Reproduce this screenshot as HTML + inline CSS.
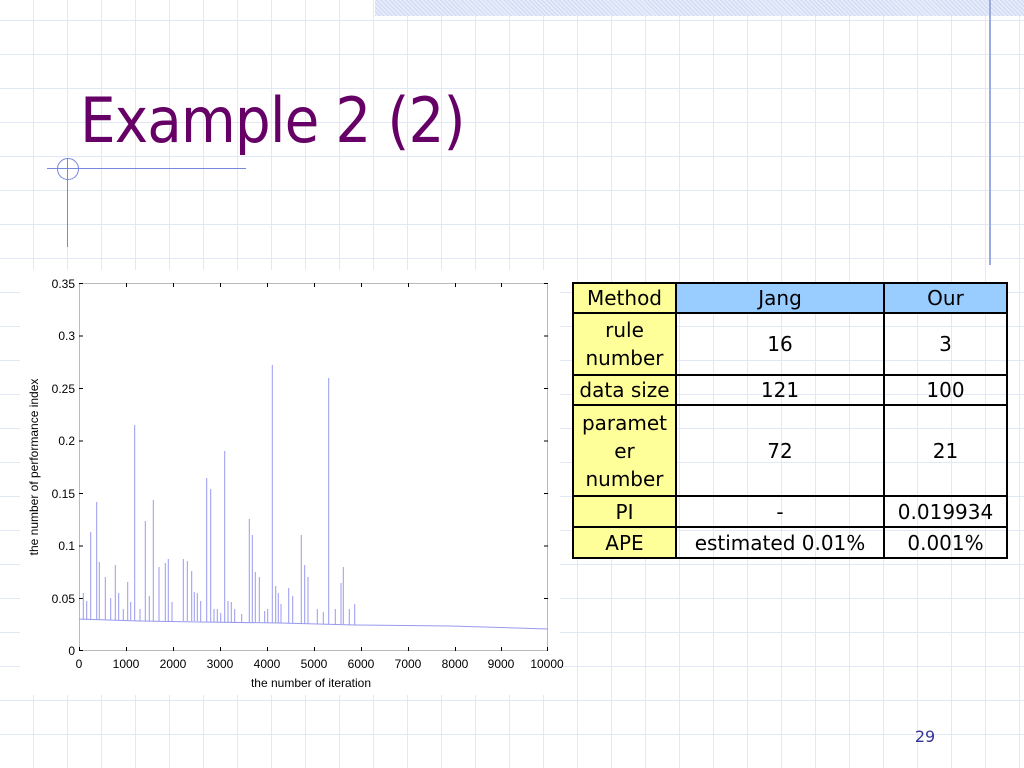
<!DOCTYPE html>
<html><head><meta charset="utf-8"><style>
html,body{margin:0;padding:0}
body{width:1024px;height:768px;position:relative;overflow:hidden;background-color:#fff;
background-image:repeating-linear-gradient(90deg,transparent 0 33px,#e2e8f6 33px 34px),repeating-linear-gradient(0deg,transparent 0 33px,#e2e8f6 33px 34px);background-position:0 0;}
.abs{position:absolute}
h1{position:absolute;left:80px;top:84px;margin:0;font:normal 62px "DejaVu Sans",sans-serif;color:#660066;letter-spacing:-1px;transform:scaleX(0.91);transform-origin:0 0;white-space:nowrap}
table{position:absolute;left:572px;top:282px;border-collapse:collapse;font:20px "DejaVu Sans",sans-serif;color:#000}
td{border:2px solid #000;text-align:center;padding:0;line-height:28px;}
td.y{background:#ffff99}
td.b{background:#99ccff}
</style></head><body>
<div class="abs" style="left:375px;top:0;width:649px;height:16px;background:repeating-linear-gradient(45deg,#cdd8f2 0 1px,#e6ecf9 1px 3px)"></div>
<div class="abs" style="left:989px;top:0;width:2px;height:265px;background:#99aadd"></div>
<div class="abs" style="left:47px;top:168px;width:199px;height:1px;background:#7788dd"></div>
<div class="abs" style="left:67px;top:158px;width:1px;height:89px;background:#7788dd"></div>
<div class="abs" style="left:57px;top:158px;width:20px;height:20px;border:1px solid #7788dd;border-radius:50%"></div>
<h1>Example 2 (2)</h1>
<svg class="abs" style="left:0;top:0" width="1024" height="768">
<rect x="20" y="270" width="540" height="425" fill="#fff"/>
<rect x="79.5" y="283.5" width="468" height="367" fill="none" stroke="#bbb"/>
<g stroke="#000" stroke-width="1">
<path d="M79 283.5h4M79 336h4M79 388.5h4M79 441h4M79 493.5h4M79 546h4M79 598.5h4M79 650.5h4M548 283.5h-4M548 336h-4M548 388.5h-4M548 441h-4M548 493.5h-4M548 546h-4M548 598.5h-4"/>
<path d="M79.5 651v-4M126.5 651v-4M173.5 651v-4M220.5 651v-4M267.5 651v-4M314.5 651v-4M361.5 651v-4M408.5 651v-4M455.5 651v-4M501.5 651v-4M547.5 651v-4M126.5 283v4M173.5 283v4M220.5 283v4M267.5 283v4M314.5 283v4M361.5 283v4M408.5 283v4M455.5 283v4M501.5 283v4"/>
</g>
<g stroke="#9999ee" stroke-width="1" fill="none">
<polyline points="79,619 140,621 200,622 280,623 355,625 450,626 548,629"/>
<path d="M83.3 620V593M86.7 620V601M90.7 620V532M96.7 620V502M99.3 620V562M105.3 620V577M110.7 620V598M115.3 620V565M118.7 620V593M123.3 620V609M127.7 620V582M130.7 620V602M134.7 621V425M140 621V609M145.3 621V521M149.3 621V596M153.3 621V500M159 621V567M165.3 621V563M168.3 621V559M172 621V602M183.3 621V559M187.3 621V561M191.7 621V571M194.3 621V592M197.3 621V593M200.7 622V601M206.7 622V478M210.7 622V489M214 622V609M217.3 622V609M220.7 622V613M224.7 622V451M228 622V601M231.3 622V602M234.7 622V609M241.7 622V614M249.3 622V519M252.3 622V535M255.3 622V572M259.3 622V577M264.7 623V611M267.7 623V609M272.3 623V365M275.7 623V586M278.3 623V593M281 623V604M288.7 623V588M292.7 623V596M301.3 624V535M304.7 624V565M308 624V577M317.3 624V609M323.3 624V612M328.7 624V378M335.3 624V609M341 624V583M343.3 624V567M349.3 625V609M354.7 625V604"/>
</g>
<g font-family="Liberation Sans,sans-serif" font-size="12" fill="#000" text-anchor="end">
<text x="75" y="288">0.35</text><text x="75" y="340">0.3</text><text x="75" y="393">0.25</text><text x="75" y="445">0.2</text><text x="75" y="498">0.15</text><text x="75" y="550">0.1</text><text x="75" y="603">0.05</text><text x="75" y="655">0</text>
</g>
<g font-family="Liberation Sans,sans-serif" font-size="12" fill="#000" text-anchor="middle">
<text x="79" y="668">0</text><text x="126" y="668">1000</text><text x="173" y="668">2000</text><text x="220" y="668">3000</text><text x="267" y="668">4000</text><text x="314" y="668">5000</text><text x="361" y="668">6000</text><text x="408" y="668">7000</text><text x="455" y="668">8000</text><text x="501" y="668">9000</text><text x="547" y="668">10000</text>
<text x="311" y="687">the number of iteration</text>
<text transform="translate(38,467) rotate(-90)">the number of performance index</text>
</g>
<text x="925" y="742" font-family="DejaVu Sans,sans-serif" font-size="16" fill="#333399" text-anchor="middle">29</text>
</svg>
<table>
<tr style="height:30px"><td class="y" style="width:101px">Method</td><td class="b" style="width:206px">Jang</td><td class="b" style="width:121px">Our</td></tr>
<tr style="height:62px"><td class="y">rule<br>number</td><td>16</td><td>3</td></tr>
<tr style="height:30px"><td class="y">data size</td><td>121</td><td>100</td></tr>
<tr style="height:91px"><td class="y">paramet<br>er<br>number</td><td>72</td><td>21</td></tr>
<tr style="height:31px"><td class="y">PI</td><td>-</td><td>0.019934</td></tr>
<tr style="height:31px"><td class="y">APE</td><td>estimated 0.01%</td><td>0.001%</td></tr>
</table>
</body></html>
